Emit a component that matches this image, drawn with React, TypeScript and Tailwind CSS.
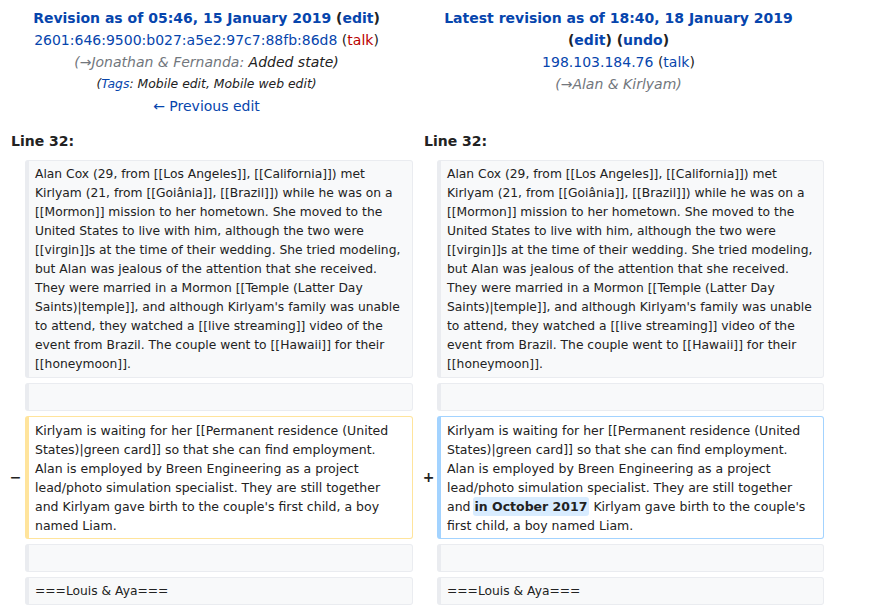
import React from 'react';

const font = "font-['DejaVu_Sans','Noto_Sans',sans-serif]";

function Context({ children }: { children?: React.ReactNode }) {
  return (
    <div className="bg-[#f8f9fa] border border-[#eaecf0] border-l-4 rounded-[3px] pl-[6px] pr-[6px] pt-[4px] pb-[3px] text-[12.3px] leading-[19px] text-[#222] min-h-[28px] whitespace-pre-wrap break-words">
      {children}
    </div>
  );
}

export default function App() {
  return (
    <div className={`w-[874px] h-[610px] overflow-hidden bg-white text-[#222] ${font}`}>
      <div className="grid grid-cols-[25px_388px_24px_387px] pt-[7px]">
        {/* header left */}
        <div className="col-span-2 text-center text-[14px] leading-[22px]">
          <div className="font-bold">
            <span className="text-[#0645ad]">Revision as of 05:46, 15 January 2019</span>{' '}
            (<span className="text-[#0645ad]">edit</span>)
          </div>
          <div>
            <span className="text-[#0645ad]">2601:646:9500:b027:a5e2:97c7:88fb:86d8</span> (
            <span className="text-[#ba0000]">talk</span>)
          </div>
          <div className="italic">
            <span className="text-[#72777d]">(→Jonathan &amp; Fernanda:</span> Added state)
          </div>
          <div className="italic text-[12.4px]">
            (<span className="text-[#0645ad]">Tags</span>: Mobile edit, Mobile web edit)
          </div>
          <div className="text-[#0645ad]">← Previous edit</div>
        </div>

        {/* header right */}
        <div className="col-span-2 text-center text-[14px] leading-[22px]">
          <div className="font-bold text-[#0645ad]">Latest revision as of 18:40, 18 January 2019</div>
          <div className="font-bold">
            (<span className="text-[#0645ad]">edit</span>) (<span className="text-[#0645ad]">undo</span>)
          </div>
          <div>
            <span className="text-[#0645ad]">198.103.184.76</span> (<span className="text-[#0645ad]">talk</span>)
          </div>
          <div className="italic text-[#72777d]">(→Alan &amp; Kirlyam)</div>
        </div>

        {/* line numbers */}
        <div className="col-span-2 pl-[11px] mt-[13px] text-[14px] leading-[22px] font-bold">Line 32:</div>
        <div className="col-span-2 pl-[11px] mt-[13px] text-[14px] leading-[22px] font-bold">Line 32:</div>
      </div>

      <div className="grid grid-cols-[25px_388px_24px_387px] gap-y-[5px] mt-[8px]">
        {/* context paragraph */}
        <div />
        <Context>
          Alan Cox (29, from [[Los Angeles]], [[California]]) met Kirlyam (21, from [[Goiânia]], [[Brazil]]) while he was on a [[Mormon]] mission to her hometown. She moved to the United States to live with him, although the two were [[virgin]]s at the time of their wedding. She tried modeling, but Alan was jealous of the attention that she received. They were married in a Mormon [[Temple (Latter Day Saints)|temple]], and although Kirlyam's family was unable to attend, they watched a [[live streaming]] video of the event from Brazil. The couple went to [[Hawaii]] for their [[honeymoon]].
        </Context>
        <div />
        <Context>
          Alan Cox (29, from [[Los Angeles]], [[California]]) met Kirlyam (21, from [[Goiânia]], [[Brazil]]) while he was on a [[Mormon]] mission to her hometown. She moved to the United States to live with him, although the two were [[virgin]]s at the time of their wedding. She tried modeling, but Alan was jealous of the attention that she received. They were married in a Mormon [[Temple (Latter Day Saints)|temple]], and although Kirlyam's family was unable to attend, they watched a [[live streaming]] video of the event from Brazil. The couple went to [[Hawaii]] for their [[honeymoon]].
        </Context>

        {/* empty context */}
        <div />
        <Context />
        <div />
        <Context />

        {/* changed paragraph */}
        <div className="flex items-center pl-[6px]">
          <span className="w-[19px] text-center text-[14px] font-bold">−</span>
        </div>
        <div className="bg-white border border-[#ffe49c] border-l-4 rounded-[3px] pl-[6px] pr-[14px] pt-[4px] pb-[3px] text-[12.5px] leading-[19px] text-[#222]">
          Kirlyam is waiting for her [[Permanent residence (United States)|green card]] so that she can find employment. Alan is employed by Breen Engineering as a project lead/photo simulation specialist. They are still together and Kirlyam gave birth to the couple's first child, a boy named Liam.
        </div>
        <div className="flex items-center pl-[7px]">
          <span className="w-[17px] text-center text-[14px] font-bold">+</span>
        </div>
        <div className="bg-white border border-[#a3d3ff] border-l-4 rounded-[3px] pl-[6px] pr-[14px] pt-[4px] pb-[3px] text-[12.5px] leading-[19px] text-[#222]">
          Kirlyam is waiting for her [[Permanent residence (United States)|green card]] so that she can find employment. Alan is employed by Breen Engineering as a project lead/photo simulation specialist. They are still together and{' '}
          <span className="bg-[#d8ecff] rounded-[3px] font-bold px-[2px] py-[2px] -ml-[2px]">in October 2017</span>{' '}
          Kirlyam gave birth to the couple's first child, a boy named Liam.
        </div>

        {/* empty context */}
        <div />
        <Context />
        <div />
        <Context />

        {/* next heading */}
        <div />
        <Context>===Louis &amp; Aya===</Context>
        <div />
        <Context>===Louis &amp; Aya===</Context>
      </div>
    </div>
  );
}
